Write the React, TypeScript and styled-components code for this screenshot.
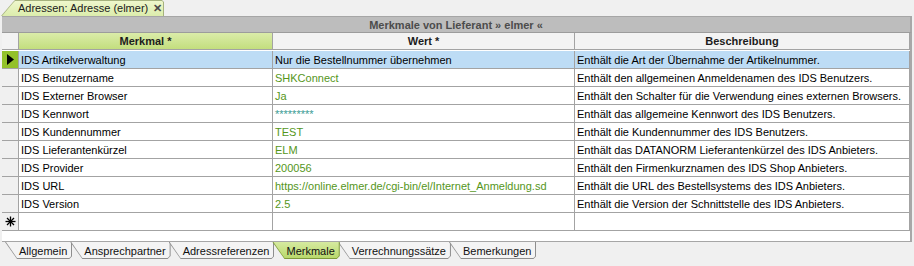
import styled, { createGlobalStyle } from 'styled-components';

const GlobalStyle = createGlobalStyle`
  html, body {
    margin: 0;
    padding: 0;
    background: #f0f0f0;
  }
  body {
    font-family: 'Liberation Sans', Arial, sans-serif;
    font-size: 11px;
    color: #000;
  }
`;

const rows = [
  { merkmal: 'IDS Artikelverwaltung', wert: 'Nur die Bestellnummer übernehmen', text: 'Enthält die Art der Übernahme der Artikelnummer.' },
  { merkmal: 'IDS Benutzername', wert: 'SHKConnect', text: 'Enthält den allgemeinen Anmeldenamen des IDS Benutzers.' },
  { merkmal: 'IDS Externer Browser', wert: 'Ja', text: 'Enthält den Schalter für die Verwendung eines externen Browsers.' },
  { merkmal: 'IDS Kennwort', wert: '*********', text: 'Enthält das allgemeine Kennwort des IDS Benutzers.', secret: true },
  { merkmal: 'IDS Kundennummer', wert: 'TEST', text: 'Enthält die Kundennummer des IDS Benutzers.' },
  { merkmal: 'IDS Lieferantenkürzel', wert: 'ELM', text: 'Enthält das DATANORM Lieferantenkürzel des IDS Anbieters.' },
  { merkmal: 'IDS Provider', wert: '200056', text: 'Enthält den Firmenkurznamen des IDS Shop Anbieters.' },
  { merkmal: 'IDS URL', wert: 'https://online.elmer.de/cgi-bin/el/Internet_Anmeldung.sd', text: 'Enthält die URL des Bestellsystems des IDS Anbieters.' },
  { merkmal: 'IDS Version', wert: '2.5', text: 'Enthält die Version der Schnittstelle des IDS Anbieters.' },
];

const sheets = ['Allgemein', 'Ansprechpartner', 'Adressreferenzen', 'Merkmale', 'Verrechnungssätze', 'Bemerkungen'];

const Window = styled.div`
  width: 914px;
  height: 266px;
  display: flex;
  flex-direction: column;
  overflow: hidden;
`;

const DocStrip = styled.div`
  height: 16px;
  display: flex;
  align-items: flex-end;
  padding-left: 1px;
`;

const DocTab = styled.div`
  position: relative;
  z-index: 1;
  height: 16px;
  width: 163px;
  display: flex;
  align-items: center;
  gap: 5px;
  padding-left: 17px;
  box-sizing: border-box;
  white-space: nowrap;
  font-size: 11px;
  color: #202020;
  &::before {
    content: '';
    position: absolute;
    inset: 0;
    z-index: -1;
    background: #a6b27e;
    clip-path: polygon(0 100%, 12px 2px, 14px 0, calc(100% - 2px) 0, 100% 2px, 100% 100%);
  }
  &::after {
    content: '';
    position: absolute;
    inset: 1px 1px 0 1px;
    z-index: -1;
    background: linear-gradient(#eef7cc, #dcedac);
    clip-path: polygon(0 100%, 11px 2px, 13px 0, calc(100% - 1px) 0, 100% 1px, 100% 100%);
  }
`;

const CloseMark = styled.span`
  font-weight: bold;
  font-size: 11px;
  color: #4a4a4a;
`;

const Panel = styled.div`
  margin: 0 2px;
  border-top: 1px solid #a6a6a6;
  display: flex;
  flex-direction: column;
`;

const TitleBand = styled.div`
  height: 15px;
  background: #bdbdbd;
  border-bottom: 1px solid #9c9c9c;
  border-right: 2px solid #a8a8a8;
  display: flex;
  align-items: center;
  justify-content: center;
  font-weight: bold;
  font-size: 11px;
  color: #4c4c4c;
`;

const Grid = styled.div`
  display: grid;
  grid-template-columns: 17px 254px 302px 1fr;
  grid-auto-rows: 18px;
  background: #fff;
  border-right: 2px solid #a8a8a8;
`;

const HeadCell = styled.div<{ $green?: boolean }>`
  height: 16px;
  box-sizing: content-box;
  border-right: 1px solid #a3a3a3;
  border-bottom: 1px solid #a3a3a3;
  display: flex;
  align-items: center;
  justify-content: center;
  font-weight: bold;
  color: #1c1c1c;
  background: ${(p) => (p.$green ? 'linear-gradient(#dbeca9, #c3de7e)' : '#f3f3f3')};
`;

const RowHead = styled.div<{ $current?: boolean }>`
  border-right: 1px solid #a3a3a3;
  border-bottom: 1px solid #a3a3a3;
  background: ${(p) => (p.$current ? '#93c12a' : '#f0f0f0')};
  display: flex;
  align-items: center;
  justify-content: center;
`;

const Cell = styled.div<{ $selected?: boolean; $tone?: 'value' | 'secret' }>`
  border-right: 1px solid #a3a3a3;
  border-bottom: 1px solid #a3a3a3;
  padding-left: 2px;
  display: flex;
  align-items: center;
  white-space: nowrap;
  overflow: hidden;
  background: ${(p) => (p.$selected ? '#bddcf5' : '#fff')};
  color: ${(p) =>
    p.$selected ? '#000' : p.$tone === 'secret' ? '#3a9c94' : p.$tone === 'value' ? '#55961a' : '#000'};
`;

const Spare = styled.div`
  height: 10px;
  background: #fff;
  border-right: 2px solid #a8a8a8;
  border-bottom: 1px solid #a6a6a6;
`;

const SheetBar = styled.div`
  display: flex;
  padding-left: 7px;
  height: 17px;
`;

const SheetTab = styled.div<{ $active?: boolean }>`
  position: relative;
  z-index: ${(p) => (p.$active ? 3 : 1)};
  margin-left: -2px;
  height: 17px;
  padding: 0 5px 0 14px;
  display: flex;
  align-items: center;
  white-space: nowrap;
  font-size: 11px;
  color: #111;
  &::before {
    content: '';
    position: absolute;
    inset: 0;
    z-index: -1;
    background: ${(p) => (p.$active ? '#7f9b3a' : '#8e8e8e')};
    clip-path: polygon(0 0, 100% 0, 100% calc(100% - 3px), calc(100% - 3px) 100%, 12px 100%);
  }
  &::after {
    content: '';
    position: absolute;
    inset: 0 1px 1px 1px;
    z-index: -1;
    background: ${(p) => (p.$active ? 'linear-gradient(#d6eaa0, #b9d96c)' : '#f4f4f4')};
    clip-path: polygon(0 0, 100% 0, 100% calc(100% - 2px), calc(100% - 2px) 100%, 11px 100%);
  }
`;

function Pointer() {
  return (
    <svg width="7" height="11" viewBox="0 0 7 11">
      <path d="M0 0 L7 5.5 L0 11 Z" fill="#000" />
    </svg>
  );
}

function NewRowMark() {
  return (
    <svg width="11" height="11" viewBox="0 0 11 11" stroke="#000" strokeWidth="1.3">
      <line x1="5.5" y1="0.5" x2="5.5" y2="10.5" />
      <line x1="0.5" y1="5.5" x2="10.5" y2="5.5" />
      <line x1="2" y1="2" x2="9" y2="9" />
      <line x1="9" y1="2" x2="2" y2="9" />
    </svg>
  );
}

export default function App() {
  return (
    <Window>
      <GlobalStyle />
      <DocStrip>
        <DocTab>
          <span>Adressen: Adresse (elmer)</span>
          <CloseMark>✕</CloseMark>
        </DocTab>
      </DocStrip>
      <Panel>
        <TitleBand>Merkmale von Lieferant » elmer «</TitleBand>
        <Grid>
          <HeadCell />
          <HeadCell $green>Merkmal *</HeadCell>
          <HeadCell>Wert *</HeadCell>
          <HeadCell>Beschreibung</HeadCell>
          {rows.map((r, i) => {
            const sel = i === 0;
            return [
              <RowHead key={`h${i}`} $current={sel}>{sel && <Pointer />}</RowHead>,
              <Cell key={`m${i}`} $selected={sel}>{r.merkmal}</Cell>,
              <Cell key={`w${i}`} $selected={sel} $tone={r.secret ? 'secret' : 'value'}>{r.wert}</Cell>,
              <Cell key={`t${i}`} $selected={sel}>{r.text}</Cell>,
            ];
          })}
          <RowHead><NewRowMark /></RowHead>
          <Cell />
          <Cell />
          <Cell />
        </Grid>
        <Spare />
      </Panel>
      <SheetBar>
        {sheets.map((s) => (
          <SheetTab key={s} $active={s === 'Merkmale'}>{s}</SheetTab>
        ))}
      </SheetBar>
    </Window>
  );
}
